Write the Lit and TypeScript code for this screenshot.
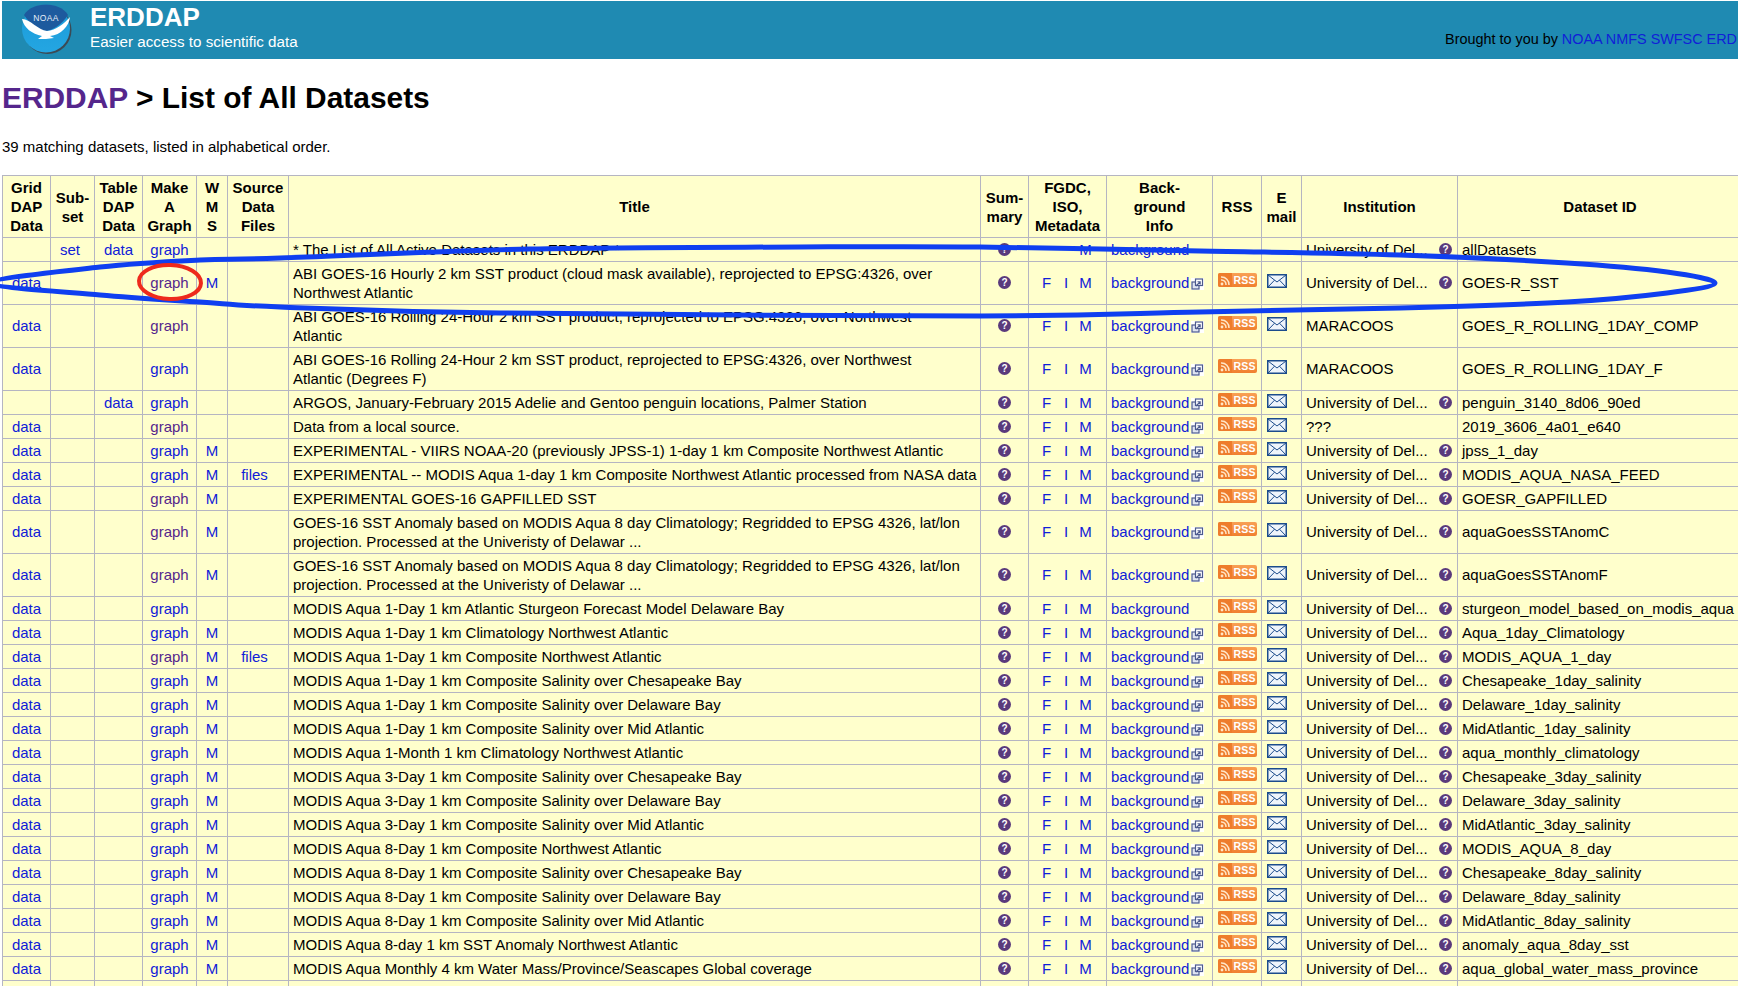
import { LitElement, html, css, svg } from 'lit';
import { customElement } from 'lit/decorators.js';

type Row = {
  data?: boolean; set?: boolean; table?: boolean; visited?: boolean; wms?: boolean; files?: boolean;
  title: string; fim?: boolean; noExt?: boolean; noFeeds?: boolean; inst?: string; id: string;
};

// titles keep the line breaks the reference shows
const rows: Row[] = [
  { set: true, table: true, title: '* The List of All Active Datasets in this ERDDAP *', noFeeds: true, id: 'allDatasets' },
  { data: true, visited: true, wms: true, title: 'ABI GOES-16 Hourly 2 km SST product (cloud mask available), reprojected to EPSG:4326, over\nNorthwest Atlantic', id: 'GOES-R_SST' },
  { data: true, visited: true, title: 'ABI GOES-16 Rolling 24-Hour 2 km SST product, reprojected to EPSG:4326, over Northwest\nAtlantic', inst: 'MARACOOS', id: 'GOES_R_ROLLING_1DAY_COMP' },
  { data: true, title: 'ABI GOES-16 Rolling 24-Hour 2 km SST product, reprojected to EPSG:4326, over Northwest\nAtlantic (Degrees F)', inst: 'MARACOOS', id: 'GOES_R_ROLLING_1DAY_F' },
  { table: true, title: 'ARGOS, January-February 2015 Adelie and Gentoo penguin locations, Palmer Station', id: 'penguin_3140_8d06_90ed' },
  { data: true, visited: true, title: 'Data from a local source.', inst: '???', id: '2019_3606_4a01_e640' },
  { data: true, wms: true, title: 'EXPERIMENTAL - VIIRS NOAA-20 (previously JPSS-1) 1-day 1 km Composite Northwest Atlantic', id: 'jpss_1_day' },
  { data: true, wms: true, files: true, title: 'EXPERIMENTAL -- MODIS Aqua 1-day 1 km Composite Northwest Atlantic processed from NASA data', id: 'MODIS_AQUA_NASA_FEED' },
  { data: true, visited: true, wms: true, title: 'EXPERIMENTAL GOES-16 GAPFILLED SST', id: 'GOESR_GAPFILLED' },
  { data: true, visited: true, wms: true, title: 'GOES-16 SST Anomaly based on MODIS Aqua 8 day Climatology; Regridded to EPSG 4326, lat/lon\nprojection. Processed at the Univeristy of Delawar ...', id: 'aquaGoesSSTAnomC' },
  { data: true, visited: true, wms: true, title: 'GOES-16 SST Anomaly based on MODIS Aqua 8 day Climatology; Regridded to EPSG 4326, lat/lon\nprojection. Processed at the Univeristy of Delawar ...', id: 'aquaGoesSSTAnomF' },
  { data: true, noExt: true, title: 'MODIS Aqua 1-Day 1 km Atlantic Sturgeon Forecast Model Delaware Bay', id: 'sturgeon_model_based_on_modis_aqua' },
  { data: true, wms: true, title: 'MODIS Aqua 1-Day 1 km Climatology Northwest Atlantic', id: 'Aqua_1day_Climatology' },
  { data: true, visited: true, wms: true, files: true, title: 'MODIS Aqua 1-Day 1 km Composite Northwest Atlantic', id: 'MODIS_AQUA_1_day' },
  { data: true, wms: true, title: 'MODIS Aqua 1-Day 1 km Composite Salinity over Chesapeake Bay', id: 'Chesapeake_1day_salinity' },
  { data: true, wms: true, title: 'MODIS Aqua 1-Day 1 km Composite Salinity over Delaware Bay', id: 'Delaware_1day_salinity' },
  { data: true, wms: true, title: 'MODIS Aqua 1-Day 1 km Composite Salinity over Mid Atlantic', id: 'MidAtlantic_1day_salinity' },
  { data: true, wms: true, title: 'MODIS Aqua 1-Month 1 km Climatology Northwest Atlantic', id: 'aqua_monthly_climatology' },
  { data: true, wms: true, title: 'MODIS Aqua 3-Day 1 km Composite Salinity over Chesapeake Bay', id: 'Chesapeake_3day_salinity' },
  { data: true, wms: true, title: 'MODIS Aqua 3-Day 1 km Composite Salinity over Delaware Bay', id: 'Delaware_3day_salinity' },
  { data: true, wms: true, title: 'MODIS Aqua 3-Day 1 km Composite Salinity over Mid Atlantic', id: 'MidAtlantic_3day_salinity' },
  { data: true, wms: true, title: 'MODIS Aqua 8-Day 1 km Composite Northwest Atlantic', id: 'MODIS_AQUA_8_day' },
  { data: true, wms: true, title: 'MODIS Aqua 8-Day 1 km Composite Salinity over Chesapeake Bay', id: 'Chesapeake_8day_salinity' },
  { data: true, wms: true, title: 'MODIS Aqua 8-Day 1 km Composite Salinity over Delaware Bay', id: 'Delaware_8day_salinity' },
  { data: true, wms: true, title: 'MODIS Aqua 8-Day 1 km Composite Salinity over Mid Atlantic', id: 'MidAtlantic_8day_salinity' },
  { data: true, wms: true, title: 'MODIS Aqua 8-day 1 km SST Anomaly Northwest Atlantic', id: 'anomaly_aqua_8day_sst' },
  { data: true, wms: true, title: 'MODIS Aqua Monthly 4 km Water Mass/Province/Seascapes Global coverage', id: 'aqua_global_water_mass_province' },
];

const colWidths = [48, 44, 48, 54, 31, 61, 692, 48, 78, 106, 49, 40, 156, 285];
const tableWidth = colWidths.reduce((a, b) => a + b, 0);

// hand drawn annotation round the GOES-R row
const blueLoop: [number, number][] = [
  [-8, 283], [100, 267], [200, 260], [280, 258], [530, 249], [800, 247], [980, 247], [1200, 251], [1400, 255],
  [1567, 263], [1667, 272], [1715, 283], [1667, 293], [1567, 302], [1400, 308], [1200, 312], [980, 316],
  [500, 313], [280, 307], [200, 302], [100, 295],
];

function smooth(pts: [number, number][]) {
  const n = pts.length;
  let d = `M${pts[0][0]} ${pts[0][1]}`;
  for (let i = 0; i < n; i++) {
    const p0 = pts[(i - 1 + n) % n], p1 = pts[i], p2 = pts[(i + 1) % n], p3 = pts[(i + 2) % n];
    d += ` C${p1[0] + (p2[0] - p0[0]) / 6} ${p1[1] + (p2[1] - p0[1]) / 6} ${p2[0] - (p3[0] - p1[0]) / 6} ${p2[1] - (p3[1] - p1[1]) / 6} ${p2[0]} ${p2[1]}`;
  }
  return d + 'Z';
}

@customElement('app-root')
export class AppRoot extends LitElement {
  static styles = css`
    :host {
      display: block;
      position: relative;
      height: 986px;
      overflow: hidden;
      background: #fff;
      font-family: "Liberation Sans", Arial, sans-serif;
      font-size: 15px;
      color: #000;
    }

    a { color: #1020d8; text-decoration: none; }
    a.visited { color: #55268c; }

    .banner {
      display: flex;
      align-items: flex-start;
      height: 58px;
      margin: 1px 0 0 2px;
      background: #1f8ab2;
      position: relative;
    }
    .logo { display: block; width: 56px; height: 56px; margin-left: 14px; flex: none; }
    .brand { margin-left: 18px; color: #fff; }
    .brand-name { font-size: 26px; font-weight: bold; line-height: 30px; margin-top: 1px; }
    .brand-sub { font-size: 15.2px; line-height: 18px; margin-top: 1px; }
    .credit { margin-left: auto; margin-top: 29px; margin-right: 1px; font-size: 14.4px; line-height: 18px; white-space: nowrap; }

    h1 {
      font-size: 29.9px;
      line-height: 36px;
      margin: 21px 0 0 2px;
      font-weight: bold;
    }

    .count { margin: 21px 0 0 2px; line-height: 19px; }

    table {
      table-layout: fixed;
      border-collapse: collapse;
      margin: 19px 0 0 2px;
      background: #ffffcc;
      line-height: 19px;
    }
    th, td {
      border: 1px solid #b5b5c2;
      padding: 2px 4px;
    }
    th { font-weight: bold; text-align: center; padding: 2px 0; }
    td.c { text-align: center; padding: 2px 0; }
    td { height: 19px; }
    td.title { white-space: pre; }

    /* middle cells of two-line rows sit half a pixel higher than the browser would put them */
    tr.tall td:not(.title) { vertical-align: top; padding-top: 11px; }

    .q {
      display: inline-block;
      width: 13px;
      height: 13px;
      margin-top: 3px;
      border-radius: 50%;
      background: #5a3a7c;
      color: #fff;
      font-size: 10px;
      font-weight: bold;
      line-height: 13px;
      text-align: center;
      vertical-align: top;
    }

    .set, .files { display: inline-block; }
    .set { margin-right: 5px; }
    .files { margin-right: 7px; }

    .fim {
      display: grid;
      grid-template-columns: repeat(3, 19.5px);
      justify-content: center;
      text-align: center;
      padding-right: 3px;
    }

    .bg { white-space: nowrap; }
    .ext { width: 13px; height: 12px; vertical-align: -2px; margin-left: 2px; }

    .rss {
      display: inline-flex;
      align-items: center;
      width: 39px;
      height: 14px;
      border-radius: 2px;
      background: linear-gradient(#f8a055, #f0802f);
      color: #fff;
      font-size: 10.5px;
      font-weight: bold;
      line-height: 14px;
      vertical-align: top;
      overflow: hidden;
    }
    .rss svg { width: 14px; height: 14px; flex: none; }
    .rss span { margin-left: 2px; letter-spacing: 0.2px; }

    .mail { width: 20px; height: 14px; margin: 1px 10px 0 0; vertical-align: top; display: inline-block; }

    .inst {
      display: flex;
      justify-content: space-between;
      align-items: flex-start;
      padding-right: 1px;
    }

    .marks { position: absolute; left: 0; top: 0; pointer-events: none; }
  `;

  renderLogo() {
    return html`<svg class="logo" viewBox="16 1 56 56">
      <defs>
        <linearGradient id="sea" x1="0" y1="0" x2="0" y2="1">
          <stop offset="0" stop-color="#1a9ad8"></stop>
          <stop offset="1" stop-color="#24a6e2"></stop>
        </linearGradient>
      </defs>
      <circle cx="47.5" cy="30" r="24" fill="#3b4a55"></circle>
      <circle cx="46" cy="28.5" r="24" fill="url(#sea)"></circle>
      <path d="M24 15 C32 1 60 1 68 15 C62 24 54 30 46 31 C38 30 30 24 24 15Z" fill="#1d5a9e"></path>
      <path d="M22 19 C30 19 38 30 47 31 C56 30 64 24 70 17 C69 26 61 35 50 36 L54 38 C48 39 44 39 38 39 L42 36 C32 34 24 28 22 19Z" fill="#fff"></path>
      <text x="46" y="20.5" text-anchor="middle" font-size="8.5" font-family="Liberation Sans" fill="#e8eef8" letter-spacing="0.4">NOAA</text>
    </svg>`;
  }

  renderRss() {
    return html`<span class="rss">
      <svg viewBox="0 0 14 14">
        <rect width="14" height="14" fill="#ee7c2c"></rect>
        <circle cx="4" cy="11" r="1.4" fill="#ffe6c8"></circle>
        <path d="M3 7 A4.5 4.5 0 0 1 8 12 M3 4 A7.5 7.5 0 0 1 11 12" fill="none" stroke="#ffe6c8" stroke-width="1.5"></path>
      </svg>
      <span>RSS</span>
    </span>`;
  }

  renderMail() {
    return html`<svg class="mail" viewBox="0 0 20 14">
      <rect x="0.75" y="0.75" width="18.5" height="12.5" fill="#eef4fb" stroke="#1c4c8c" stroke-width="1.5"></rect>
      <path d="M1 1 L10 8 L19 1 M1 13 L7.5 6.2 M19 13 L12.5 6.2" fill="none" stroke="#1c4c8c" stroke-width="1"></path>
    </svg>`;
  }

  renderExt() {
    return html`<svg class="ext" viewBox="0 0 13 12">
      <rect width="13" height="12" fill="#fff"></rect>
      <rect x="1" y="4" width="7" height="7" fill="#dfe4f2" stroke="#4c5a8e" stroke-width="1.2"></rect>
      <rect x="4.5" y="1" width="7" height="6.5" fill="#fff" stroke="#4c5a8e" stroke-width="1.2"></rect>
      <path d="M5 8 L9 4 M6.5 3.8 H9.2 V6.5" fill="none" stroke="#4c5a8e" stroke-width="1.1"></path>
    </svg>`;
  }

  renderRow(r: Row) {
    return html`<tr class=${r.title.includes('\n') ? 'tall' : ''}>
      <td class="c">${r.data ? html`<a href="#">data</a>` : ''}</td>
      <td class="c">${r.set ? html`<a href="#" class="set">set</a>` : ''}</td>
      <td class="c">${r.table ? html`<a href="#">data</a>` : ''}</td>
      <td class="c"><a href="#" class=${r.visited ? 'visited' : ''}>graph</a></td>
      <td class="c">${r.wms ? html`<a href="#">M</a>` : ''}</td>
      <td class="c">${r.files ? html`<a href="#" class="files">files</a>` : ''}</td>
      <td class="title">${r.title}</td>
      <td class="c"><span class="q">?</span></td>
      <td class="c">
        <div class="fim">
          ${r.noFeeds ? html`<span></span><span></span>` : html`<a href="#">F</a><a href="#">I</a>`}
          <a href="#">M</a>
        </div>
      </td>
      <td class="bg"><a href="#">background</a>${r.noExt || r.noFeeds ? '' : this.renderExt()}</td>
      <td class="c">${r.noFeeds ? '' : this.renderRss()}</td>
      <td class="c">${r.noFeeds ? '' : this.renderMail()}</td>
      <td>
        ${r.inst
          ? r.inst
          : html`<div class="inst"><span>University of Del...</span><span class="q">?</span></div>`}
      </td>
      <td>${r.id}</td>
    </tr>`;
  }

  render() {
    return html`
      <div class="banner">
        ${this.renderLogo()}
        <div class="brand">
          <div class="brand-name">ERDDAP</div>
          <div class="brand-sub">Easier access to scientific data</div>
        </div>
        <div class="credit">Brought to you by <a href="#">NOAA</a> <a href="#">NMFS</a> <a href="#">SWFSC</a> <a href="#">ERD</a></div>
      </div>

      <h1><a href="#" class="visited">ERDDAP</a> &gt; List of All Datasets</h1>
      <p class="count">39 matching datasets, listed in alphabetical order.</p>

      <table style="width:${tableWidth}px">
        <colgroup>${colWidths.map(w => html`<col style="width:${w}px" />`)}</colgroup>
        <thead>
          <tr>
            <th>Grid<br />DAP<br />Data</th>
            <th>Sub-<br />set</th>
            <th>Table<br />DAP<br />Data</th>
            <th>Make<br />A<br />Graph</th>
            <th>W<br />M<br />S</th>
            <th>Source<br />Data<br />Files</th>
            <th>Title</th>
            <th>Sum-<br />mary</th>
            <th>FGDC,<br />ISO,<br />Metadata</th>
            <th>Back-<br />ground<br />Info</th>
            <th>RSS</th>
            <th>E<br />mail</th>
            <th>Institution</th>
            <th>Dataset ID</th>
          </tr>
        </thead>
        <tbody>
          ${rows.map(r => this.renderRow(r))}
          <tr>${colWidths.map(() => html`<td></td>`)}</tr>
        </tbody>
      </table>

      <svg class="marks" width="1738" height="986">
        ${svg`<path d=${smooth(blueLoop)} fill="none" stroke="#0f3ff0" stroke-width="5"></path>`}
        ${svg`<ellipse cx="170" cy="282" rx="31" ry="17" fill="none" stroke="#ee2a1c" stroke-width="4" transform="rotate(2 170 282)"></ellipse>`}
      </svg>
    `;
  }
}
